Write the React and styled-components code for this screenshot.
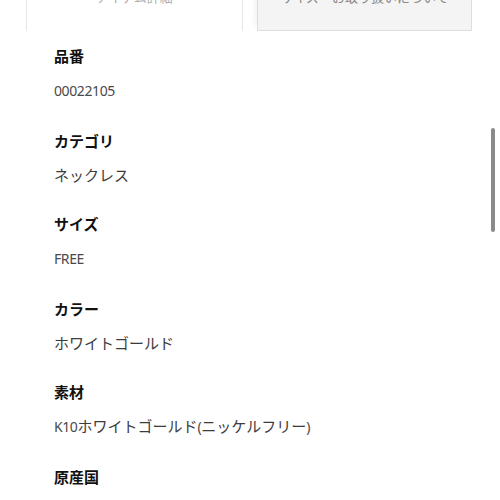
import React from "react";
import styled, { createGlobalStyle } from "styled-components";

const Global = createGlobalStyle`
  html, body { margin: 0; padding: 0; background: #fff; }
  body { width: 500px; height: 500px; overflow: hidden; font-family: "Noto Sans", "Noto Sans CJK JP", sans-serif; }
`;

const Page = styled.div`
  width: 500px;
  height: 500px;
  overflow: hidden;
  position: relative;
`;

const Tabs = styled.div`
  display: flex;
  gap: 14px;
  margin: -34px 0 0 26px;
  width: 446px;
  height: 65px;
`;

const Tab = styled.div`
  box-sizing: border-box;
  display: flex;
  align-items: flex-start;
  justify-content: center;
  padding-top: 22px;
  font-size: 13px;
  line-height: 18px;
  font-family: "Noto Sans CJK JP", sans-serif;
  color: ${(p) => (p.$active ? "#b0b0b0" : "#888")};
  background: ${(p) => (p.$active ? "#fff" : "#f4f4f4")};
  border: 1px solid ${(p) => (p.$active ? "#e8e8e8" : "#dedede")};
  border-top: none;
  border-bottom: ${(p) => (p.$active ? "none" : "1px solid #dedede")};
  ${(p) => (p.$active ? "width: 217px;" : "flex: 1; box-shadow: -6px 0 6px -5px rgba(0,0,0,0.08);")}
`;

const List = styled.dl`
  margin: 14px 0 0 54px;
  padding: 0;
`;

const Item = styled.div`
  margin-bottom: 27.6px;
`;

const Label = styled.dt`
  font-family: "Noto Sans CJK JP", sans-serif;
  font-weight: 700;
  font-size: 15px;
  line-height: 22px;
  color: #111;
  margin: 0 0 12px;
`;

const Value = styled.dd`
  margin: 0;
  font-family: "Noto Sans CJK JP", sans-serif;
  font-size: 15px;
  line-height: 22px;
  color: #3c3c3c;
  font-weight: 400;
`;

const Latin = styled.span`
  font-family: "Noto Sans", sans-serif;
  font-size: 14px;
  color: #4a4a4a;
  letter-spacing: -0.4px;
`;

const Scrollbar = styled.div`
  position: absolute;
  left: 491px;
  top: 128px;
  width: 4px;
  height: 104px;
  border-radius: 2px;
  background: #8a8a8a;
`;

const items = [
  { label: "品番", value: <Latin>00022105</Latin> },
  { label: "カテゴリ", value: "ネックレス" },
  { label: "サイズ", value: <Latin>FREE</Latin> },
  { label: "カラー", value: "ホワイトゴールド" },
  {
    label: "素材",
    value: (
      <>
        <Latin>K10</Latin>ホワイトゴールド<Latin>(</Latin>ニッケルフリー<Latin>)</Latin>
      </>
    ),
  },
  { label: "原産国", value: "日本" },
];

export default function App() {
  return (
    <Page>
      <Global />
      <Tabs>
        <Tab $active>アイテム詳細</Tab>
        <Tab>サイズ・お取り扱いについて</Tab>
      </Tabs>
      <List>
        {items.map((it) => (
          <Item key={it.label}>
            <Label>{it.label}</Label>
            <Value>{it.value}</Value>
          </Item>
        ))}
      </List>
      <Scrollbar />
    </Page>
  );
}
